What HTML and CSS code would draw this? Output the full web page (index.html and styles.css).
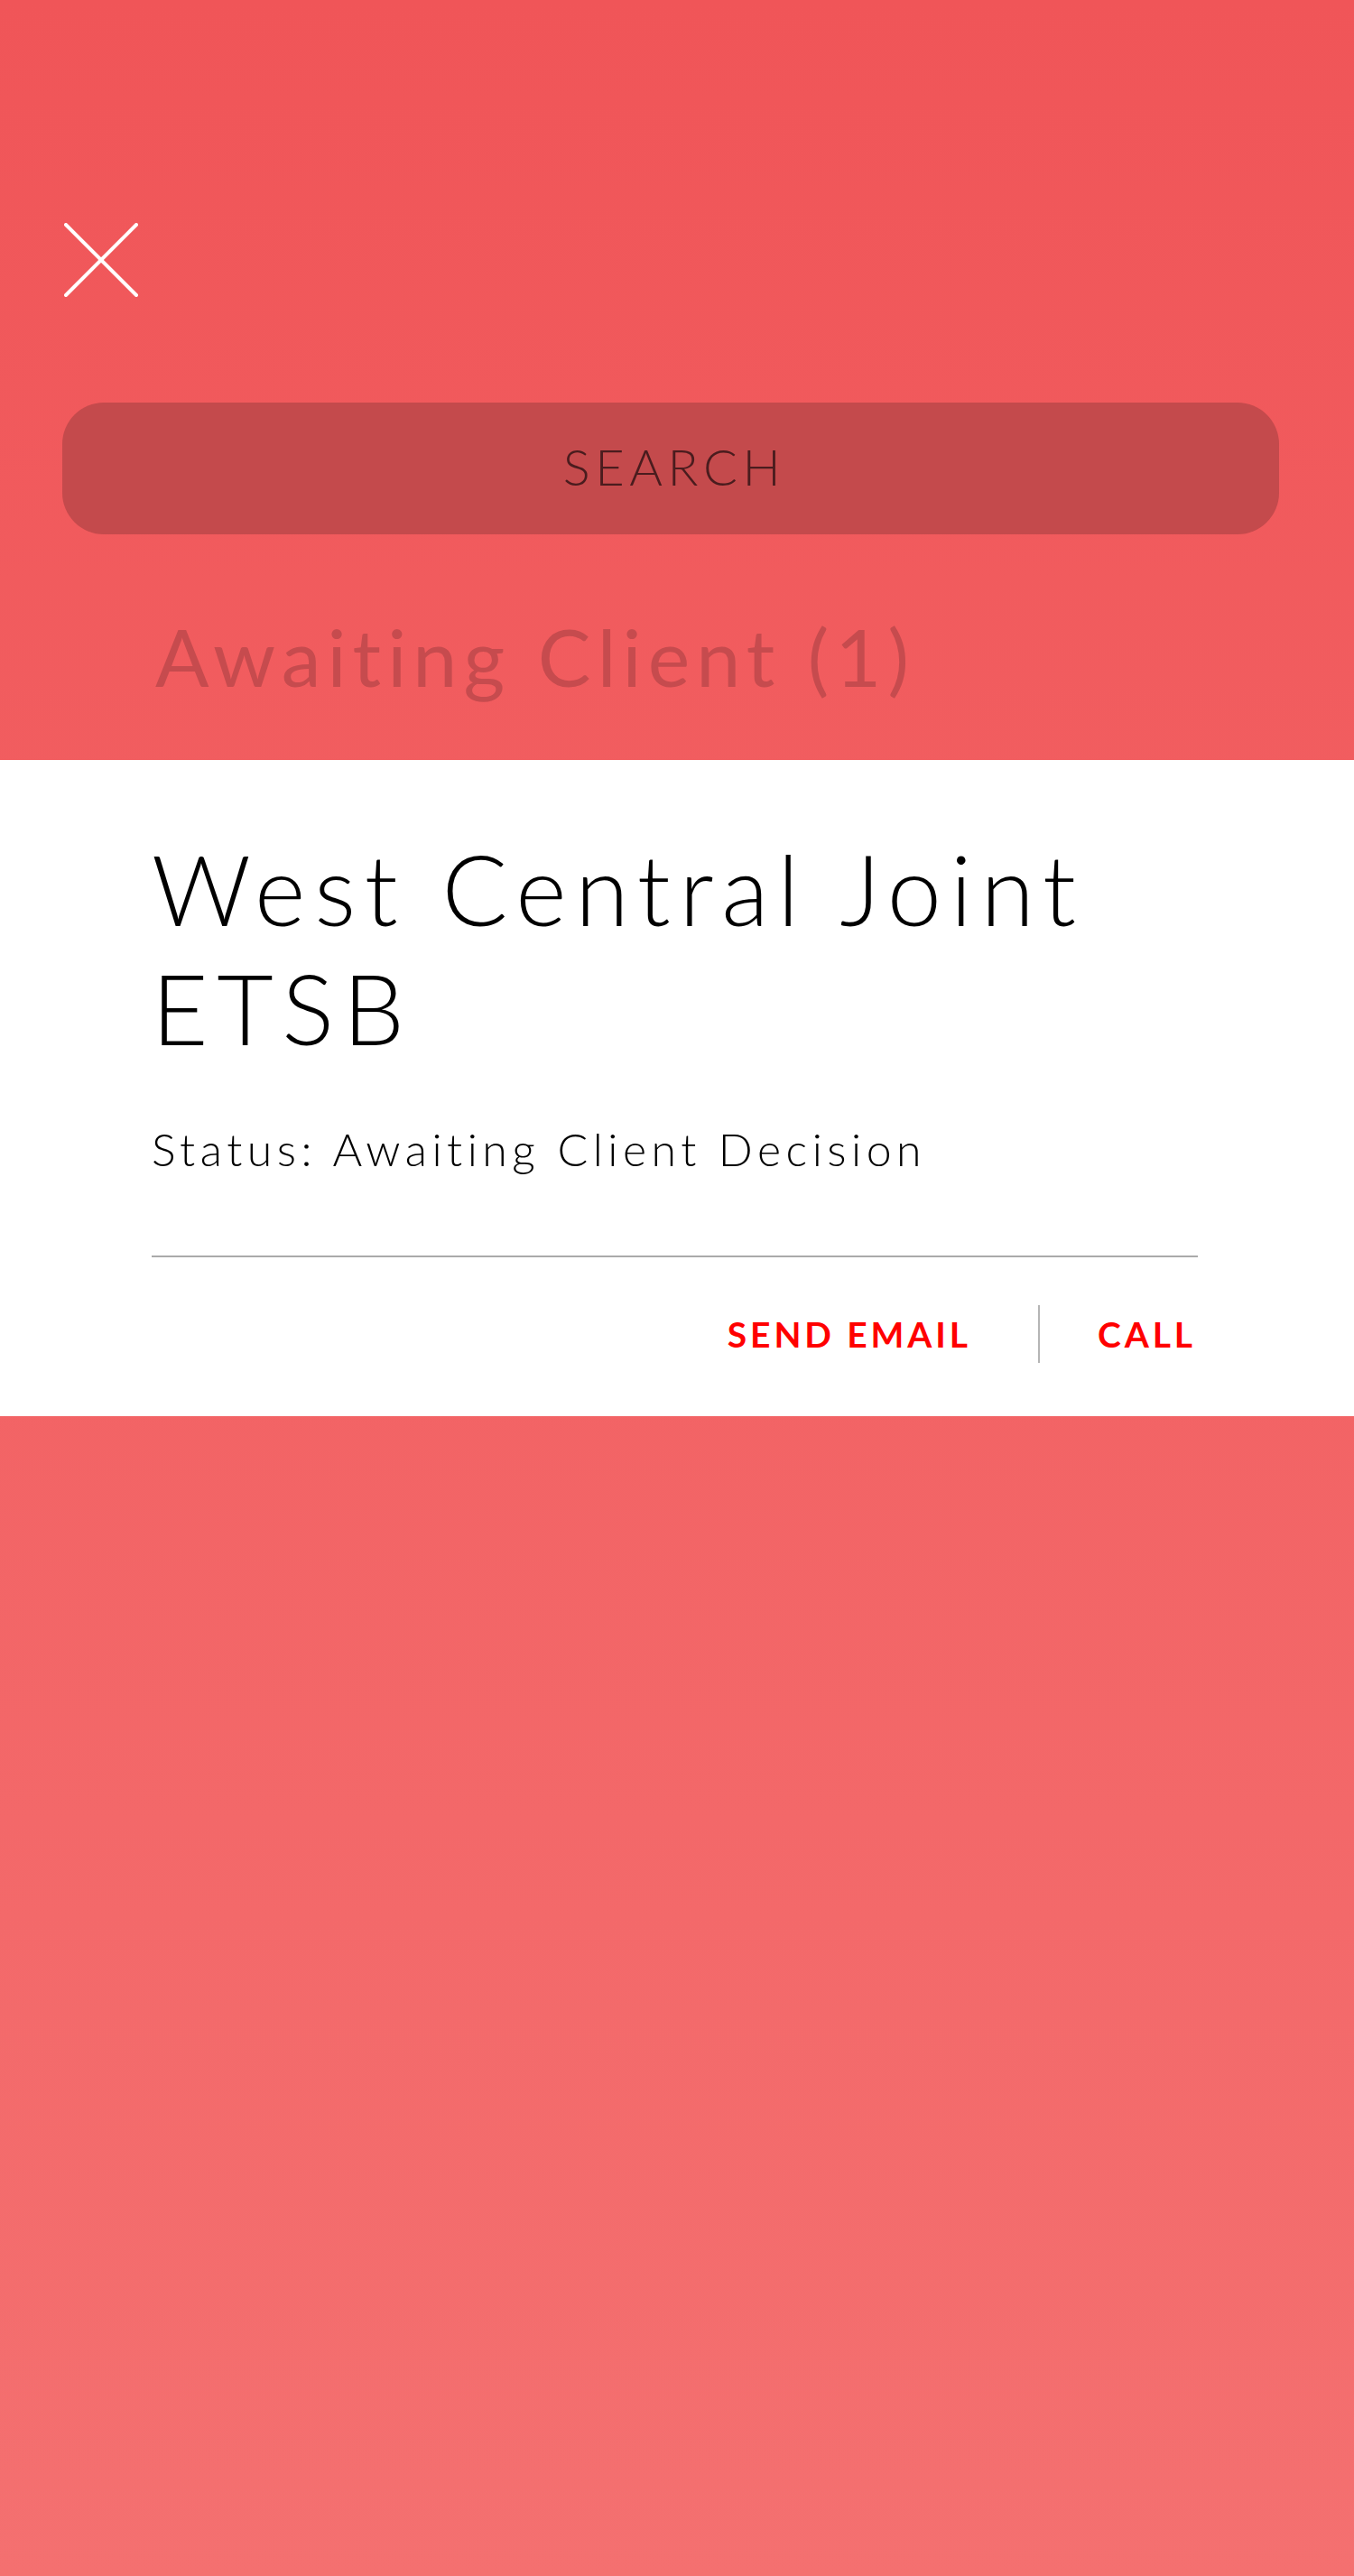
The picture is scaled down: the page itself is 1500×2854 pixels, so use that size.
FILE: index.html
```html
<!DOCTYPE html>
<html lang="en">
<head>
<meta charset="utf-8">
<title>Awaiting Client</title>
<link rel="stylesheet" href="styles.css">
</head>
<body>
<div class="page">
  <header class="top">
    <button class="close" aria-label="Close">
      <svg width="82" height="82" viewBox="0 0 82 82"><path d="M2 2 L80 80 M80 2 L2 80" stroke="#fff" stroke-width="4" stroke-linecap="round" fill="none"/></svg>
    </button>
    <div class="search">SEARCH</div>
    <h2 class="group-title">Awaiting Client (1)</h2>
  </header>
  <section class="card">
    <h1 class="card-title">West Central Joint ETSB</h1>
    <p class="status">Status: Awaiting Client Decision</p>
    <div class="divider"></div>
    <div class="actions">
      <a class="action">SEND EMAIL</a>
      <span class="sep"></span>
      <a class="action call">CALL</a>
    </div>
  </section>
</div>
</body>
</html>
```

FILE: styles.css
```css
html, body {
  margin: 0;
  padding: 0;
}
body {
  width: 1500px;
  min-height: 2854px;
  background: linear-gradient(180deg, #f05558 0%, #f26163 45%, #f47070 100%);
  font-family: Lato, "Open Sans", sans-serif;
}
.page {
  display: flex;
  flex-direction: column;
}
.top {
  display: flex;
  flex-direction: column;
  padding: 247px 0 65px 0;
}
.close {
  margin: 0 0 0 71px;
  padding: 0;
  width: 82px;
  height: 82px;
  border: none;
  background: none;
  display: block;
}
.close svg { display: block; }
.search {
  margin: 117px 0 0 69px;
  width: 1348px;
  height: 146px;
  box-sizing: border-box;
  padding: 0 0 6px 8px;
  border-radius: 46px;
  background: #c44a4c;
  color: #4a1c1e;
  font-weight: 300;
  font-size: 56px;
  letter-spacing: 0.1em;
  display: flex;
  align-items: center;
  justify-content: center;
}
.group-title {
  margin: 85px 0 0 172px;
  font-size: 88px;
  line-height: 100px;
  font-weight: 400;
  letter-spacing: 0.08em;
  color: #c64b4e;
}
.card {
  background: #fff;
  padding: 76px 173px 59px 168px;
  display: flex;
  flex-direction: column;
}
.card-title {
  margin: 0;
  font-size: 108px;
  line-height: 132px;
  font-weight: 300;
  letter-spacing: 0.09em;
  color: #000;
  width: 1150px;
}
.status {
  margin: 61px 0 0 0;
  font-size: 50px;
  line-height: 60px;
  font-weight: 300;
  letter-spacing: 0.11em;
  color: #000;
}
.divider {
  margin-top: 88px;
  height: 2px;
  background: #aaaaaa;
}
.actions {
  margin-top: 53px;
  display: flex;
  justify-content: flex-end;
  align-items: center;
  padding-right: 2px;
}
.action {
  color: #ff0000;
  font-weight: 700;
  font-size: 39px;
  letter-spacing: 0.1em;
}
.sep {
  width: 2px;
  height: 64px;
  background: #b5b5b5;
  margin: 0 64px 0 74px;
}
```
